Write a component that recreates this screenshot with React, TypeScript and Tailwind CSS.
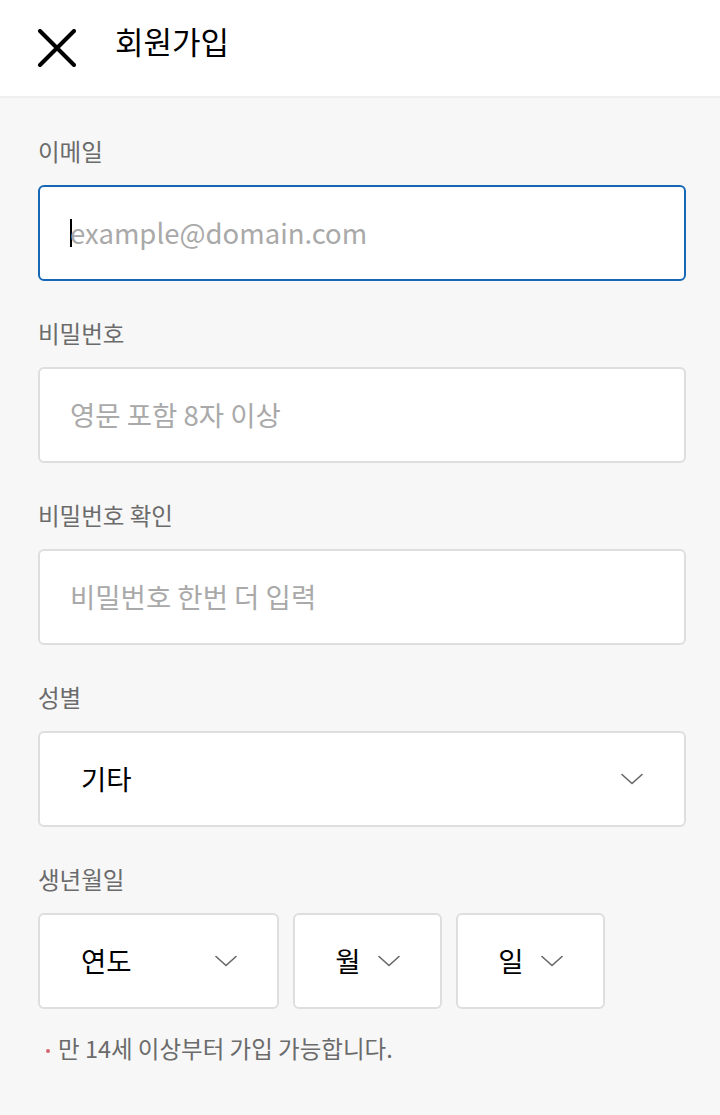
import { useState } from 'react';

const font = { fontFamily: '"Noto Sans CJK KR", "Noto Sans", sans-serif' };

function Chevron() {
    return (
        <svg width="22" height="12" viewBox="0 0 22 12" fill="none">
            <path d="M1 1.5L11 10.5L21 1.5" stroke="#666" strokeWidth="1.6" strokeLinecap="round" strokeLinejoin="round" />
        </svg>
    );
}

function Label({ children }: { children: React.ReactNode }) {
    return <div className="text-[23.5px] leading-[30px] text-[#6b6b6b] mb-[19px]">{children}</div>;
}

function TextField({ placeholder, focused = false, type = 'text' }: { placeholder: string; focused?: boolean; type?: string }) {
    return (
        <div
            className={`flex items-center h-[96px] rounded-[6px] bg-white border-2 pl-[30px] pr-4 ${
                focused ? 'border-[#1668b4]' : 'border-[#dedede]'
            }`}
        >
            {focused && <span className="w-[2px] h-[28px] bg-black -mr-[2px]" />}
            <input
                type={type}
                placeholder={placeholder}
                className="flex-1 bg-transparent outline-none text-[27.5px] text-black placeholder:text-[#a9a9a9]"
                style={font}
            />
        </div>
    );
}

function SelectBox({ value, className }: { value: string; className: string }) {
    return (
        <div className={`flex items-center h-[96px] rounded-[6px] bg-white border-2 border-[#dedede] ${className}`}>
            <span className="text-[27.5px] text-black">{value}</span>
            <Chevron />
        </div>
    );
}

export default function App() {
    const [gender] = useState('기타');

    return (
        <div className="min-h-[1115px] bg-[#f7f7f7]" style={font}>
            <header className="h-[98px] bg-white border-b-2 border-[#efefef] flex items-center">
                <svg className="ml-[38px]" width="38" height="38" viewBox="0 0 38 38" fill="none">
                    <path d="M2 2L36 36M36 2L2 36" stroke="#000" strokeWidth="4" strokeLinecap="round" />
                </svg>
                <h1 className="ml-[39px] text-[31px] text-black font-normal mt-[-14px]">회원가입</h1>
            </header>

            <main className="pl-[38px] pr-[34px] pt-[38px]">
                <Label>이메일</Label>
                <TextField placeholder="example@domain.com" focused />

                <div className="mt-[37px]">
                    <Label>비밀번호</Label>
                    <TextField placeholder="영문 포함 8자 이상" type="password" />
                </div>

                <div className="mt-[37px]">
                    <Label>비밀번호 확인</Label>
                    <TextField placeholder="비밀번호 한번 더 입력" type="password" />
                </div>

                <div className="mt-[37px]">
                    <Label>성별</Label>
                    <SelectBox value={gender} className="justify-between pl-[41px] pr-[41px]" />
                </div>

                <div className="mt-[37px]">
                    <Label>생년월일</Label>
                    <div className="flex gap-[14px]">
                        <SelectBox value="연도" className="w-[241px] justify-between pl-[41px] pr-[40px]" />
                        <SelectBox value="월" className="w-[149px] justify-center gap-[17px]" />
                        <SelectBox value="일" className="w-[149px] justify-center gap-[17px]" />
                    </div>
                </div>

                <p className="mt-[22px] flex items-center text-[23.5px] text-[#6b6b6b]">
                    <span className="w-[4px] h-[4px] rounded-full bg-[#d9646e] ml-[8px] mr-[8px] mt-[4px]" />
                    만 14세 이상부터 가입 가능합니다.
                </p>
            </main>
        </div>
    );
}
